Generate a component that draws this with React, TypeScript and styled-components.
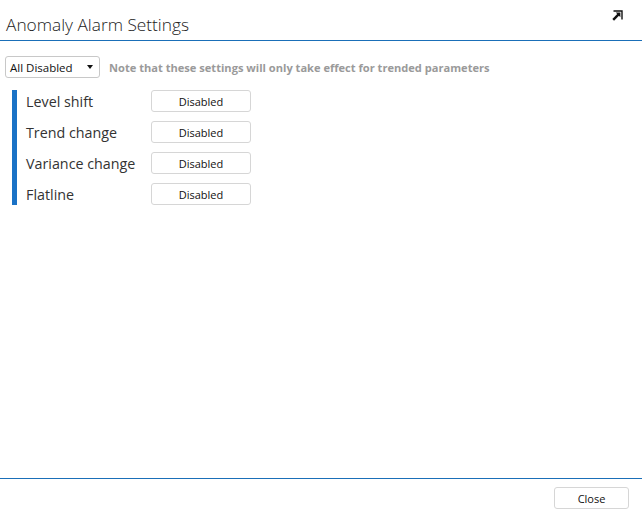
import React from 'react';
import styled, { createGlobalStyle } from 'styled-components';

const GlobalStyle = createGlobalStyle`
  html, body {
    margin: 0;
    padding: 0;
    background: #fff;
    font-family: "Open Sans", "Noto Sans", sans-serif;
    color: #222;
  }
`;

const Dialog = styled.div`
  width: 642px;
  height: 524px;
  display: flex;
  flex-direction: column;
  box-sizing: border-box;
`;

const Header = styled.div`
  height: 41px;
  box-sizing: border-box;
  border-bottom: 1px solid #1a6fb8;
  display: flex;
  align-items: flex-start;
  justify-content: space-between;
  padding: 0 19px 0 6px;
`;

const Title = styled.div`
  margin-top: 14px;
  font-size: 17.3px;
  line-height: 22px;
  font-weight: 300;
  color: #222;
`;

const PopOut = styled.svg`
  width: 11px;
  height: 11px;
  margin-top: 10px;
`;

const Body = styled.div`
  flex: 1;
  padding: 15px 5px 0 5px;
`;

const Toolbar = styled.div`
  display: flex;
  align-items: center;
  gap: 9px;
`;

const Select = styled.div`
  width: 95px;
  height: 22px;
  box-sizing: border-box;
  border: 1px solid #c8c8c8;
  border-radius: 3px;
  display: flex;
  align-items: center;
  justify-content: space-between;
  padding: 0 6px 0 4px;
  font-size: 11.5px;
  color: #111;
`;

const Caret = styled.span`
  width: 0;
  height: 0;
  border-left: 3px solid transparent;
  border-right: 3px solid transparent;
  border-top: 4px solid #111;
`;

const Note = styled.div`
  font-size: 11.1px;
  font-weight: 700;
  color: #9a9a9a;
`;

const Group = styled.div`
  margin: 12px 0 0 7px;
  border-left: 5px solid #1a72c6;
  padding: 0 0 0 9px;
  display: flex;
  flex-direction: column;
  gap: 9px;
`;

const Row = styled.div`
  display: flex;
  align-items: center;
  height: 22px;
`;

const Label = styled.div`
  width: 125px;
  font-size: 14.3px;
  color: #333;
`;

const Button = styled.button<{ $width?: number }>`
  width: ${(p) => p.$width ?? 100}px;
  height: 22px;
  background: #fff;
  border: 1px solid #d6d6d6;
  border-radius: 3px;
  font-family: "Open Sans", "Noto Sans", sans-serif;
  font-size: 11px;
  color: #111;
  padding: 0;
`;

const Footer = styled.div`
  height: 46px;
  box-sizing: border-box;
  border-top: 1px solid #1a6fb8;
  display: flex;
  justify-content: flex-end;
  align-items: flex-start;
  padding: 8px 13px 0 0;
`;

const rows = ['Level shift', 'Trend change', 'Variance change', 'Flatline'];

export default function App() {
  return (
    <Dialog>
      <GlobalStyle />
      <Header>
        <Title>Anomaly Alarm Settings</Title>
        <PopOut viewBox="0 0 11 11">
          <path d="M1.5 1H10V9.5" fill="none" stroke="#111" strokeWidth="1.4" />
          <path d="M1.2 9.8L6.8 4.2" stroke="#111" strokeWidth="2.4" />
          <path d="M3.8 2.6L8.4 2.6L8.4 7.2Z" fill="#111" />
        </PopOut>
      </Header>
      <Body>
        <Toolbar>
          <Select>
            All Disabled
            <Caret />
          </Select>
          <Note>Note that these settings will only take effect for trended parameters</Note>
        </Toolbar>
        <Group>
          {rows.map((r) => (
            <Row key={r}>
              <Label>{r}</Label>
              <Button>Disabled</Button>
            </Row>
          ))}
        </Group>
      </Body>
      <Footer>
        <Button $width={75}>Close</Button>
      </Footer>
    </Dialog>
  );
}
